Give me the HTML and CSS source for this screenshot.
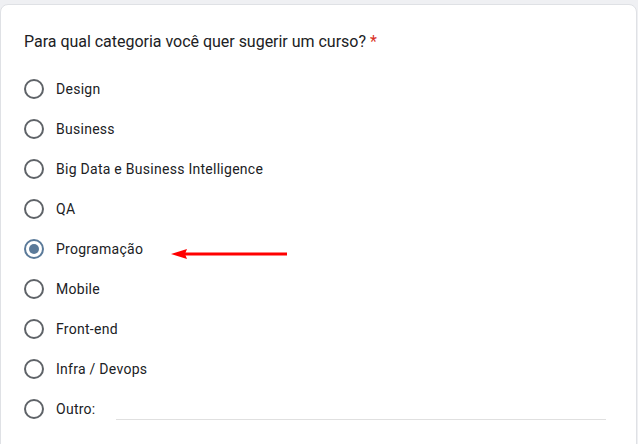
FILE: index.html
```html
<!DOCTYPE html>
<html lang="pt">
<head>
<meta charset="utf-8">
<link rel="stylesheet" href="styles.css">
</head>
<body>
<div class="page">
  <div class="card">
    <div class="question">Para qual categoria você quer sugerir um curso? <span class="req">*</span></div>
    <div class="options">
      <div class="opt"><span class="radio"></span><span class="label">Design</span></div>
      <div class="opt"><span class="radio"></span><span class="label">Business</span></div>
      <div class="opt"><span class="radio"></span><span class="label">Big Data e Business Intelligence</span></div>
      <div class="opt"><span class="radio"></span><span class="label">QA</span></div>
      <div class="opt"><span class="radio checked"></span><span class="label">Programação</span>
        <svg class="arrow" width="120" height="12" viewBox="0 0 120 12"><line x1="10" y1="6" x2="116" y2="6" stroke="#ff0000" stroke-width="3"/><polygon points="0,6 16,1 14,6 16,11" fill="#ff0000"/></svg>
      </div>
      <div class="opt"><span class="radio"></span><span class="label">Mobile</span></div>
      <div class="opt"><span class="radio"></span><span class="label">Front-end</span></div>
      <div class="opt"><span class="radio"></span><span class="label">Infra / Devops</span></div>
      <div class="opt"><span class="radio"></span><span class="label">Outro:</span><span class="other-line"></span></div>
    </div>
  </div>
</div>
</body>
</html>
```

FILE: styles.css
```css
html, body {
  margin: 0;
  padding: 0;
  background: #eff0f3;
  font-family: Roboto, "Liberation Sans", Arial, sans-serif;
  color: #202124;
}
.page {
  padding-top: 4px;
  width: 638px;
  height: 440px;
  overflow: hidden;
}
.card {
  width: 637px;
  height: 460px;
  box-sizing: border-box;
  background: #fff;
  border: 1px solid #dfe1e5;
  border-radius: 8px;
  padding: 27px 24px 0 23px;
}
.question {
  font-size: 16px;
  line-height: 20px;
  letter-spacing: -0.02px;
  color: #202124;
}
.req {
  color: #d93025;
}
.options {
  margin-top: 17px;
  display: flex;
  flex-direction: column;
}
.opt {
  height: 40px;
  display: flex;
  align-items: center;
  position: relative;
}
.radio {
  width: 20px;
  height: 20px;
  box-sizing: border-box;
  border: 2px solid #5f6368;
  border-radius: 50%;
  flex: none;
  position: relative;
}
.radio.checked {
  border-color: #5b7a99;
}
.radio.checked::after {
  content: "";
  position: absolute;
  left: 3px;
  top: 3px;
  width: 10px;
  height: 10px;
  border-radius: 50%;
  background: #5b7a99;
}
.label {
  margin-left: 12px;
  font-size: 14px;
  line-height: 20px;
  letter-spacing: 0.27px;
  color: #202124;
}
.arrow {
  margin-left: 28px;
  margin-top: 10px;
}
.other-line {
  margin-left: 20px;
  width: 490px;
  height: 1px;
  background: #e0e0e0;
  align-self: flex-end;
  margin-bottom: 9px;
}
```
